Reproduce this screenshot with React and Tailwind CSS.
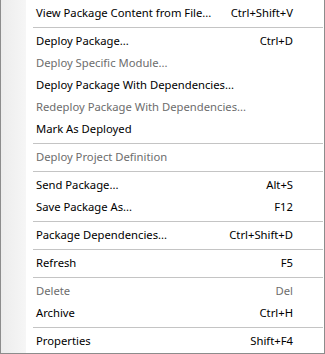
const items = [
  { label: 'View Package Content from File...', key: 'Ctrl+Shift+V' },
  'sep',
  { label: 'Deploy Package...', key: 'Ctrl+D' },
  { label: 'Deploy Specific Module...', disabled: true },
  { label: 'Deploy Package With Dependencies...' },
  { label: 'Redeploy Package With Dependencies...', disabled: true },
  { label: 'Mark As Deployed' },
  'sep',
  { label: 'Deploy Project Definition', disabled: true },
  'sep',
  { label: 'Send Package...', key: 'Alt+S' },
  { label: 'Save Package As...', key: 'F12' },
  'sep',
  { label: 'Package Dependencies...', key: 'Ctrl+Shift+D' },
  'sep',
  { label: 'Refresh', key: 'F5' },
  'sep',
  { label: 'Delete', key: 'Del', disabled: true },
  { label: 'Archive', key: 'Ctrl+H' },
  'sep',
  { label: 'Properties', key: 'Shift+F4' },
];

export default function App() {
  return (
    <div
      className="w-[325px] h-[354px] flex bg-white border-x border-b border-[#8c8c8c] text-[11.25px] text-black whitespace-nowrap"
      style={{ fontFamily: '"Noto Sans", sans-serif' }}
    >
      <div className="w-[25px] shrink-0 bg-gradient-to-r from-[#ececec] to-[#f6f6f6]" />
      <div className="flex-1 flex flex-col pt-[2px]">
        {items.map((item, i) =>
          item === 'sep' ? (
            <div key={i} className="h-[6px] flex items-center pl-[7px] pr-[1px]">
              <div className="h-px w-full bg-[#c4c4c4]" />
            </div>
          ) : (
            <div
              key={i}
              className={`h-[22px] flex items-center justify-between pl-[10px] pr-[31px] ${
                item.disabled ? 'text-[#6d6d6d]' : ''
              }`}
            >
              <span>{item.label}</span>
              {item.key && <span>{item.key}</span>}
            </div>
          )
        )}
      </div>
    </div>
  );
}
